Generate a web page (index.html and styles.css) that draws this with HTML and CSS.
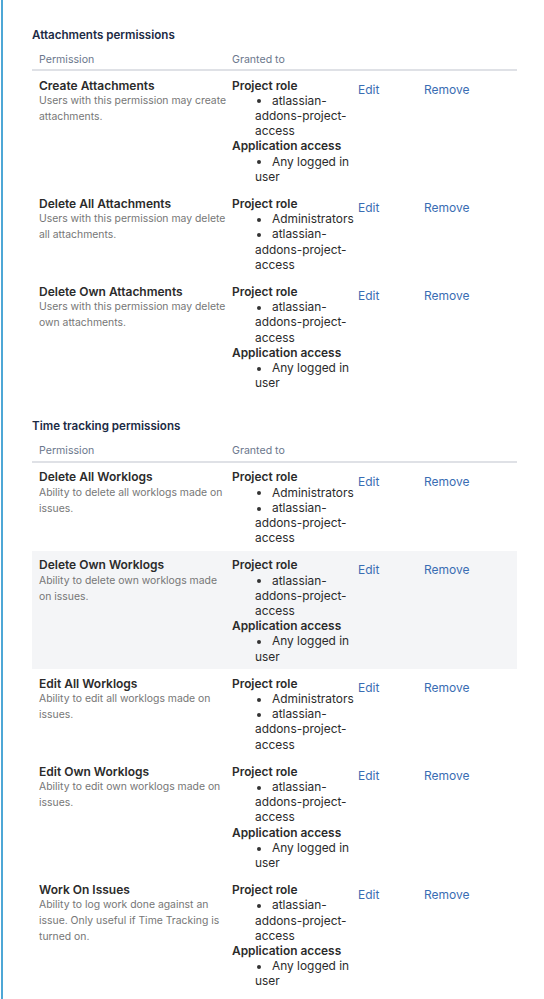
FILE: index.html
```html
<!DOCTYPE html>
<html>
<head>
<meta charset="utf-8">
<link rel="stylesheet" href="styles.css">
</head>
<body>
<div class="page">
  <section class="section">
    <h2 class="section-title">Attachments permissions</h2>
    <div class="table">
      <div class="row head">
        <div class="cell c1">Permission</div>
        <div class="cell c2h">Granted to</div>
        <div class="cell c3"></div>
        <div class="cell c4"></div>
      </div>
      <div class="row">
        <div class="cell c1"><div class="perm">Create Attachments</div><div class="desc">Users with this permission may create attachments.</div></div>
        <div class="cell c2"><div class="grp">Project role</div><ul><li>atlassian-addons-project-access</li></ul><div class="grp">Application access</div><ul><li>Any logged in user</li></ul></div>
        <div class="cell c3"><a class="link">Edit</a></div>
        <div class="cell c4"><a class="link">Remove</a></div>
      </div>
      <div class="row">
        <div class="cell c1"><div class="perm">Delete All Attachments</div><div class="desc">Users with this permission may delete all attachments.</div></div>
        <div class="cell c2"><div class="grp">Project role</div><ul><li>Administrators</li><li>atlassian-addons-project-access</li></ul></div>
        <div class="cell c3"><a class="link">Edit</a></div>
        <div class="cell c4"><a class="link">Remove</a></div>
      </div>
      <div class="row">
        <div class="cell c1"><div class="perm">Delete Own Attachments</div><div class="desc">Users with this permission may delete own attachments.</div></div>
        <div class="cell c2"><div class="grp">Project role</div><ul><li>atlassian-addons-project-access</li></ul><div class="grp">Application access</div><ul><li>Any logged in user</li></ul></div>
        <div class="cell c3"><a class="link">Edit</a></div>
        <div class="cell c4"><a class="link">Remove</a></div>
      </div>
    </div>
  </section>
  <section class="section second">
    <h2 class="section-title">Time tracking permissions</h2>
    <div class="table">
      <div class="row head">
        <div class="cell c1">Permission</div>
        <div class="cell c2h">Granted to</div>
        <div class="cell c3"></div>
        <div class="cell c4"></div>
      </div>
      <div class="row">
        <div class="cell c1"><div class="perm">Delete All Worklogs</div><div class="desc">Ability to delete all worklogs made on issues.</div></div>
        <div class="cell c2"><div class="grp">Project role</div><ul><li>Administrators</li><li>atlassian-addons-project-access</li></ul></div>
        <div class="cell c3"><a class="link">Edit</a></div>
        <div class="cell c4"><a class="link">Remove</a></div>
      </div>
      <div class="row hl">
        <div class="cell c1"><div class="perm">Delete Own Worklogs</div><div class="desc">Ability to delete own worklogs made on issues.</div></div>
        <div class="cell c2"><div class="grp">Project role</div><ul><li>atlassian-addons-project-access</li></ul><div class="grp">Application access</div><ul><li>Any logged in user</li></ul></div>
        <div class="cell c3"><a class="link">Edit</a></div>
        <div class="cell c4"><a class="link">Remove</a></div>
      </div>
      <div class="row">
        <div class="cell c1"><div class="perm">Edit All Worklogs</div><div class="desc">Ability to edit all worklogs made on issues.</div></div>
        <div class="cell c2"><div class="grp">Project role</div><ul><li>Administrators</li><li>atlassian-addons-project-access</li></ul></div>
        <div class="cell c3"><a class="link">Edit</a></div>
        <div class="cell c4"><a class="link">Remove</a></div>
      </div>
      <div class="row">
        <div class="cell c1"><div class="perm">Edit Own Worklogs</div><div class="desc">Ability to edit own worklogs made on issues.</div></div>
        <div class="cell c2"><div class="grp">Project role</div><ul><li>atlassian-addons-project-access</li></ul><div class="grp">Application access</div><ul><li>Any logged in user</li></ul></div>
        <div class="cell c3"><a class="link">Edit</a></div>
        <div class="cell c4"><a class="link">Remove</a></div>
      </div>
      <div class="row">
        <div class="cell c1"><div class="perm">Work On Issues</div><div class="desc">Ability to log work done against an issue. Only useful if Time Tracking is turned on.</div></div>
        <div class="cell c2"><div class="grp">Project role</div><ul><li>atlassian-addons-project-access</li></ul><div class="grp">Application access</div><ul><li>Any logged in user</li></ul></div>
        <div class="cell c3"><a class="link">Edit</a></div>
        <div class="cell c4"><a class="link">Remove</a></div>
      </div>
    </div>
  </section>
</div>
</body>
</html>
```
FILE: styles.css
```css
html, body {
  margin: 0;
  padding: 0;
  background: #ffffff;
}
body {
  font-family: Inter, "Liberation Sans", Arial, sans-serif;
  color: #2b2b2b;
  overflow: hidden;
}
.page {
  margin-left: 1px;
  border-left: 2px solid #4ea7d6;
  min-height: 999px;
  padding: 27px 0 0 29px;
  box-sizing: border-box;
}
.section-title {
  margin: 0;
  font-size: 11.6px;
  line-height: 16px;
  font-weight: 600;
  color: #1c2b45;
}
.section.second .section-title {
  margin-top: 22px;
}
.section.second .row.head {
  padding-top: 9.5px;
}
.table {
  width: 485px;
}
.row {
  display: grid;
  grid-template-columns: 200px 126px 66px 93px;
  padding: 6.5px 0 5.5px;
}
.row.head {
  padding: 8.5px 0 2.5px;
  border-bottom: 2px solid #dfe1e6;
  font-size: 10.6px;
  line-height: 15px;
  color: #6b778c;
}
.row.hl {
  background: #f4f5f7;
}
.cell {
  min-width: 0;
}
.c1 {
  padding: 0 5px 0 7px;
}
.perm {
  font-size: 12px;
  line-height: 15.2px;
  font-weight: 600;
  color: #2b2b2b;
}
.desc {
  font-size: 10.4px;
  line-height: 16px;
  color: #767676;
}
.c2 {
  font-size: 11.9px;
  line-height: 15.2px;
  color: #2b2b2b;
}
.grp {
  font-weight: 600;
}
.c2 ul {
  margin: 0 0 0 23px;
  padding: 0;
  list-style: none;
}
.c2 li::before {
  content: "";
  display: inline-block;
  width: 4px;
  height: 4px;
  border-radius: 50%;
  background: #333333;
  margin: 0 11px 0 2px;
  vertical-align: middle;
}
.c3, .c4 {
  padding-top: 4.5px;
  font-size: 12px;
  line-height: 15px;
}
.link {
  color: #3a6db3;
  text-decoration: none;
}
```
